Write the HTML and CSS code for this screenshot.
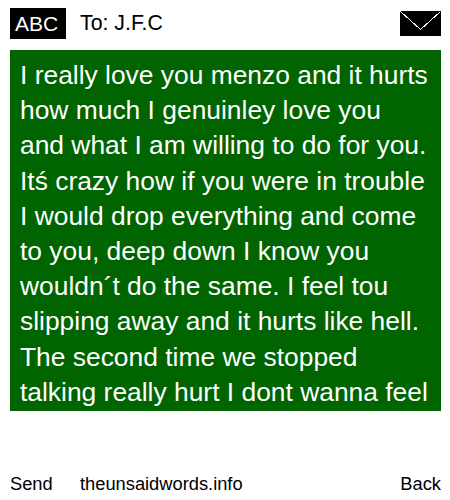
FILE: index.html
```html
<!DOCTYPE html>
<html lang="en">
<head>
  <meta charset="UTF-8" />
  <title>The Unsaid Words</title>
  <link rel="stylesheet" href="styles.css">
</head>
<body>

  <div class="top">
    <div class="abc">ABC</div>
    <div class="to">To: J.F.C</div>
    <svg class="envelope" width="41" height="25" viewBox="0 0 41 25" shape-rendering="crispEdges">
      <rect width="41" height="25" fill="#000" />
      <path d="M0.5 0.5 L20.5 18.5 L40.5 0.5" fill="none" stroke="#fff" stroke-width="1" />
    </svg>
  </div>

  <div class="message">I really love you menzo and it hurts how much I genuinley love you and what I am willing to do for you. Itś crazy how if you were in trouble I would drop everything and come to you, deep down I know you wouldn´t do the same. I feel tou slipping away and it hurts like hell. The second time we stopped talking really hurt I dont wanna feel</div>

  <div class="bottom">
    <span class="send">Send</span>
    <span class="site">theunsaidwords.info</span>
    <span class="back">Back</span>
  </div>

</body>
</html>
```

FILE: styles.css
```css
html, body {
  height: 100%;
}

body {
  margin: 0;
  padding: 8px 9px 0 10px;
  box-sizing: border-box;
  display: flex;
  flex-direction: column;
  font-family: "Liberation Sans", Arial, sans-serif;
  background: #fff;
  color: #000;
  overflow: hidden;
}

.top {
  display: flex;
  align-items: center;
  height: 31px;
  margin-bottom: 11px;
}

.abc {
  box-sizing: border-box;
  width: 56px;
  height: 31px;
  padding-left: 5px;
  line-height: 31px;
  background: #000;
  color: #fff;
  font-size: 21px;
}

.to {
  margin-left: 14px;
  font-size: 21.3px;
}

.envelope {
  margin-left: auto;
  display: block;
}

.message {
  box-sizing: border-box;
  height: 361px;
  padding: 8px 10px 0;
  background: #006400;
  color: #fff;
  font-size: 26.4px;
  line-height: 35.2px;
}

.bottom {
  display: flex;
  margin-top: 62px;
  font-size: 18.3px;
  line-height: 22px;
}

.send {
  width: 70px;
}

.back {
  margin-left: auto;
}
```
